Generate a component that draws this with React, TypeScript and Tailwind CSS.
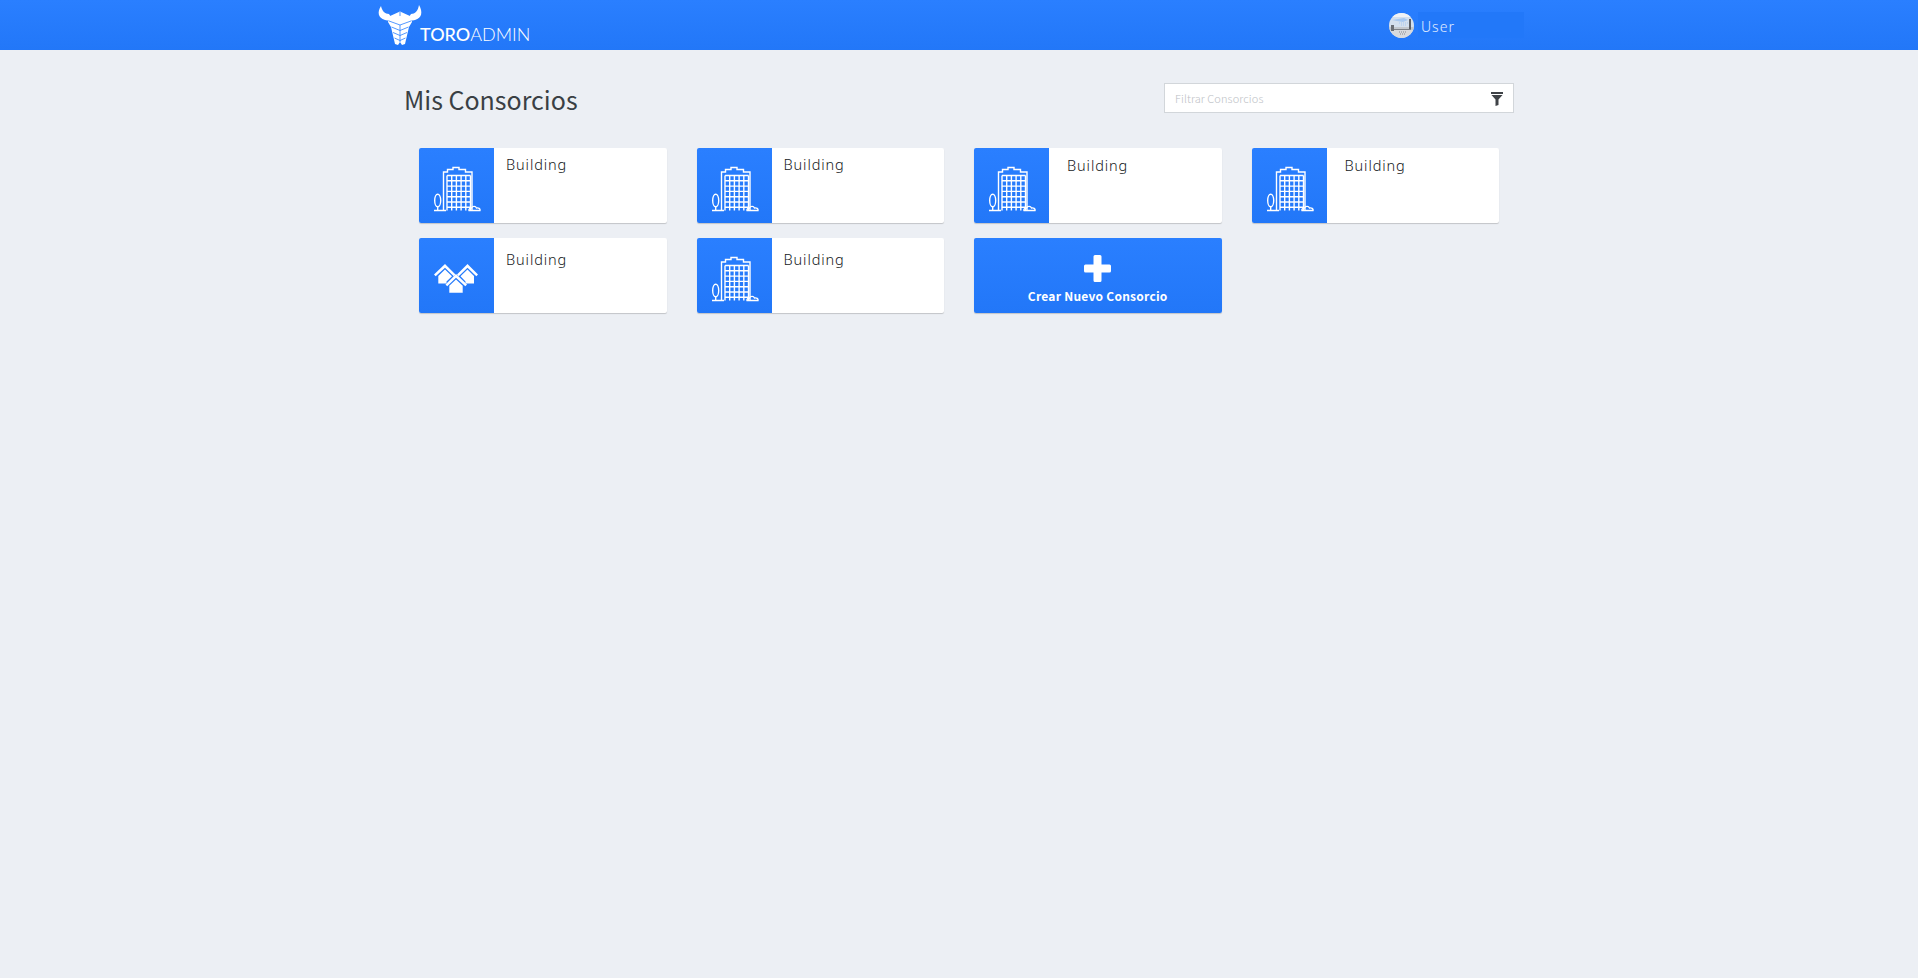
const sans = "font-['Noto_Sans_CJK_JP','Noto_Sans',sans-serif]";
const blue = 'bg-gradient-to-b from-[#2a7fff] to-[#2277f8]';

function BullLogo() {
  return (
    <svg width="48" height="44" viewBox="0 0 48 44" className="shrink-0 text-white">
      <path
        d="M5 3 C1 9 2 15 9 17 C12 18 14 17 16 15.500 L13 11 C9 11 6 8 5 3 Z M43 2 C47 9 46 15 39 17 C36 18 34 17 32 15.500 L35 11 C39 11 42 8 43 2 Z"
        fill="currentColor"
      />
      <path d="M14 13 L24 8.500 L34 13 L36 19 L33 24 L29 41 L26 42 L24 39 L22 42 L19 41 L15 24 L12 19 Z" fill="currentColor" />
      <path d="M13 18 L24 22 L35 18 M24 9 V13 M15.500 24 L24 27.500 L32.500 24 M17 29.500 L24 32.500 L31 29.500 M18.500 35 L24 37.500 L29.500 35 M24 22 L24 39" stroke="#2a7fff" strokeWidth="0.8" fill="none" />
    </svg>
  );
}

function BuildingIcon() {
  const cols = [28, 32.7, 37.4, 42.1, 46.8, 51.5];
  const rows = [27.5, 32.800, 38.100, 43.400, 48.700, 54, 59.3];
  return (
    <svg width="75" height="75" viewBox="0 0 75 75" fill="none" stroke="white" strokeWidth="1.400">
      <path d="M24.500 62.500 V24 H28.500 V21.500 H34 V19.500 H40 V21.500 H46.500 V24 H53 V62.500" />
      {cols.map((x) => (
        <path key={x} d={`M${x} 27.500 V62.500`} />
      ))}
      {rows.map((y) => (
        <path key={y} d={`M28 ${y} H51.500`} />
      ))}
      <ellipse cx="18.700" cy="52.500" rx="3" ry="6.300" />
      <path d="M18.700 58 V62.500 M15 62.500 H27 M50 62.500 H61 C61.500 60.500 59.500 59.500 57.500 60 C56.500 57.800 53.500 58 52.500 60 C51 60 49.500 61 50 62.500 Z" />
    </svg>
  );
}

function HousesIcon() {
  return (
    <svg width="75" height="75" viewBox="0 0 75 75" fill="white">
      <path d="M15 36.500 L26 26 L36.500 36.500 L34.800 38.300 L26 29.800 L16.700 38.300 Z" />
      <path d="M19.300 38 L26 31.500 L33 38.300 L27.500 43.500 V45.500 H19.300 Z" />
      <path d="M38 36.500 L48.500 26 L59 36.500 L57.300 38.300 L48.500 29.800 L39.700 38.300 Z" />
      <path d="M41.500 38.300 L48.500 31.500 L55 38 V45.500 H46.500 V43.500 Z" />
      <path d="M26.500 46.500 L37 36 L48 46.500 L46.300 48.300 L37 39.800 L28.200 48.300 Z" />
      <path d="M30.300 47.800 L37 41.500 L43.700 47.800 V54.800 H30.300 Z" />
    </svg>
  );
}

function Avatar() {
  return (
    <svg width="25" height="25" viewBox="0 0 25 25" className="shrink-0">
      <defs>
        <clipPath id="avatar-clip">
          <circle cx="12.500" cy="12.500" r="12.500" />
        </clipPath>
      </defs>
      <g clipPath="url(#avatar-clip)">
        <rect width="25" height="25" fill="#d4e0ee" />
        <rect y="0" width="25" height="4" fill="#f0f3f6" />
        <path d="M3 7 L15 5 L19 7 L14 9 L8 8 Z" fill="#a7c8f0" />
        <path d="M10 10 H19 M12 12 H18" stroke="#a7c8f0" strokeWidth="1" strokeDasharray="1 1" />
        <rect y="14" width="25" height="3" fill="#c3c8ce" />
        <rect y="16" x="3" width="19" height="1" fill="#7c8086" />
        <rect y="17" width="25" height="8" fill="#d8dadd" />
        <rect x="20" y="6" width="2" height="10" fill="#5b5f66" />
        <rect x="2" y="12" width="3" height="6" fill="#6a6e75" />
        <path d="M10 19 H18 M11 21 H17" stroke="#85898f" strokeWidth="1" strokeDasharray="1 1" />
      </g>
    </svg>
  );
}

function FunnelIcon() {
  return (
    <svg width="12" height="14" viewBox="0 0 12 14" fill="#3f4347" className="mt-[1px]">
      <rect x="0" y="0" width="12" height="2" />
      <path d="M0.500 3 H11.500 L7.500 7.500 V13 L4.500 14 V7.500 Z" />
    </svg>
  );
}

function BuildingCard({ houses, shifted, low }: { houses?: boolean; shifted?: boolean; low?: boolean }) {
  return (
    <div className="px-[15px]">
      <div className="flex h-[75px] overflow-hidden rounded-[2px] bg-white shadow-[0_1px_1px_rgba(0,0,0,0.18)]">
        <div className={`w-[75px] shrink-0 ${blue}`}>{houses ? <HousesIcon /> : <BuildingIcon />}</div>
        <div
          className={`${shifted ? 'pl-[18px] pt-[6px]' : 'pl-[12px]'} ${low ? 'pt-[10px]' : ''} ${!shifted && !low ? 'pt-[5px]' : ''} font-['Noto_Sans',sans-serif] text-[14.5px] font-light leading-[22px] tracking-[0.9px] text-[#16191c]`}
        >
          Building
        </div>
      </div>
    </div>
  );
}

function NewCard() {
  return (
    <div className="px-[15px]">
      <button className={`flex h-[75px] w-full flex-col items-center rounded-[2px] text-white shadow-[0_1px_1px_rgba(0,0,0,0.18)] ${blue}`}>
        <svg width="27" height="27" viewBox="0 0 27 27" fill="white" className="mt-[17px]">
          <path d="M9.500 1.500 Q9.500 0 11 0 H16 Q17.500 0 17.500 1.500 V9.500 H25.500 Q27 9.500 27 11 V16 Q27 17.500 25.500 17.500 H17.500 V25.500 Q17.500 27 16 27 H11 Q9.500 27 9.500 25.500 V17.500 H1.500 Q0 17.500 0 16 V11 Q0 9.500 1.500 9.500 H9.500 Z" />
        </svg>
        <span className="mt-[5px] text-[12px] font-bold leading-[18px] tracking-[0.25px]">Crear Nuevo Consorcio</span>
      </button>
    </div>
  );
}

export default function App() {
  return (
    <div className={`min-h-[978px] bg-[#eceff4] ${sans}`}>
      <header className={`h-[50px] ${blue}`}>
        <div className="relative mx-auto flex h-full w-[1110px]">
          <div className="ml-[-28px] flex pt-[3px]">
            <BullLogo />
            <div className="ml-[-4px] mt-[19px] font-['Lato',sans-serif] text-[18px] leading-[24px] tracking-[0px] text-white">
              <span className="font-medium">TORO</span>
              <span className="font-light">ADMIN</span>
            </div>
          </div>
          <div className="ml-auto mr-[-10px] flex items-center">
            <Avatar />
            <div className="ml-[4px] h-[26px] w-[106px] bg-[#2278f9] pl-[3px] pt-[2px] font-['Noto_Sans',sans-serif] text-[14px] font-light leading-[26px] tracking-[1px] text-[#e3edff]">User</div>
          </div>
        </div>
      </header>

      <main className="mx-auto w-[1110px]">
        <div className="flex h-[98px] items-start justify-between">
          <h1 className="mt-[31px] text-[25px] font-normal leading-[36px] text-[#3a3f44]">Mis Consorcios</h1>
          <div className="mt-[33px] flex h-[30px] w-[350px] items-center justify-between border border-[#d2d6da] bg-white pl-[10px] pr-[10px]">
            <span className="pt-[1px] text-[11px] font-light tracking-[0.1px] text-[#bcc0c5]">Filtrar Consorcios</span>
            <FunnelIcon />
          </div>
        </div>
        <div className="grid grid-cols-4 gap-y-[15px]">
          <BuildingCard />
          <BuildingCard />
          <BuildingCard shifted />
          <BuildingCard shifted />
          <BuildingCard houses low />
          <BuildingCard low />
          <NewCard />
        </div>
      </main>
    </div>
  );
}
